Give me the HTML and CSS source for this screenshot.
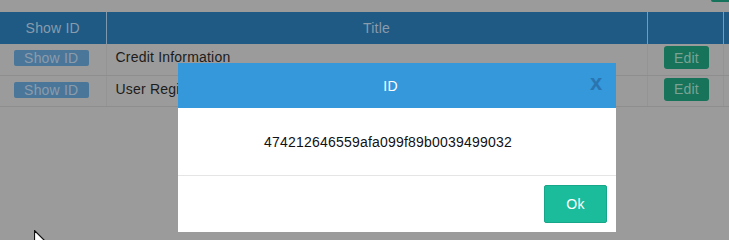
FILE: index.html
```html
<!DOCTYPE html>
<html lang="en">
<head>
  <meta charset="UTF-8">
  <title>Records</title>
  <link rel="stylesheet" href="styles.css">
</head>
<body>

  <div class="toolbar">
    <span class="add-btn"></span>
  </div>

  <table class="records">
    <colgroup>
      <col class="w-id">
      <col class="w-title">
      <col class="w-edit">
      <col class="w-extra">
    </colgroup>
    <thead>
      <tr>
        <th>Show ID</th>
        <th>Title</th>
        <th></th>
        <th></th>
      </tr>
    </thead>
    <tbody>
      <tr>
        <td class="show-cell"><button class="show-btn">Show ID</button></td>
        <td class="title">Credit Information</td>
        <td class="edit-cell"><button class="edit-btn">Edit</button></td>
        <td></td>
      </tr>
      <tr>
        <td class="show-cell"><button class="show-btn">Show ID</button></td>
        <td class="title">User Registration</td>
        <td class="edit-cell"><button class="edit-btn">Edit</button></td>
        <td></td>
      </tr>
    </tbody>
  </table>

  <div class="modal">
    <div class="modal-header">
      <span class="modal-title">ID</span>
      <span class="modal-close">x</span>
    </div>
    <div class="modal-body">474212646559afa099f89b0039499032</div>
    <div class="modal-footer">
      <button class="ok-btn">Ok</button>
    </div>
  </div>

  <!-- mouse pointer -->
  <svg class="cursor" width="12" height="18" viewBox="0 0 12 18">
    <path d="M0.5 0.5 L0.5 15 L4 11.5 L6.5 17 L8.5 16 L6 10.5 L10.5 10.5 Z" fill="#fff" stroke="#111" stroke-width="1.2"/>
  </svg>

</body>
</html>
```

FILE: styles.css
```css
body {
  margin: 0;
  height: 240px;
  background: #9b9b9b;
  overflow: hidden;
  font-family: "Liberation Sans", Arial, sans-serif;
  font-size: 14px;
  letter-spacing: 0.2px;
  position: relative;
}

.toolbar {
  height: 12px;
  display: flex;
  justify-content: flex-end;
}

.add-btn {
  display: block;
  width: 18px;
  height: 2px;
  background: #15735c;
  border-radius: 0 0 0 2px;
}

.records {
  border-collapse: collapse;
  width: 760px;
  table-layout: fixed;
}

.w-id { width: 106px; }
.w-title { width: 541px; }
.w-edit { width: 76px; }
.w-extra { width: 37px; }

.records th {
  height: 32px;
  padding: 0;
  background: #1e5a84;
  color: #8a9bab;
  font-weight: normal;
  border-right: 1px solid #7f98ad;
}

.records td {
  height: 31px;
  box-sizing: border-box;
  padding: 0;
  vertical-align: top;
  border-bottom: 1px solid #8e8e8e;
  border-right: 1px solid #949494;
  color: #1c1c1c;
  line-height: 16px;
}

.records td.show-cell { padding: 6px 3px 0 0; text-align: center; }
.records td.title { padding: 5px 0 0 9px; }
.records td.edit-cell { padding: 2px 0 0 3px; text-align: center; }

.show-btn {
  display: inline-block;
  width: 75px;
  height: 16px;
  padding: 0;
  border: 0;
  border-radius: 2px;
  background: #4a7699;
  color: #8c9cab;
  font-family: inherit;
  font-size: 14px;
  letter-spacing: inherit;
  line-height: 16px;
  vertical-align: top;
}

.edit-btn {
  display: inline-block;
  width: 45px;
  height: 23px;
  padding: 0;
  border: 0;
  border-radius: 3px;
  background: #17735a;
  color: #7aa395;
  font-family: inherit;
  font-size: 14px;
  letter-spacing: inherit;
  vertical-align: top;
}

.modal {
  position: absolute;
  left: 178px;
  top: 63px;
  width: 438px;
  background: #fff;
}

.modal-header {
  height: 45px;
  padding: 0 13px;
  background: #3498db;
  display: flex;
  align-items: center;
}

.modal-title {
  flex: 1;
  text-align: center;
  color: #fff;
}

.modal-close {
  width: 13px;
  color: #2a74b0;
  font-size: 22px;
  font-weight: bold;
  line-height: 1;
  margin-top: -6px;
}

.modal-body {
  height: 67px;
  padding-right: 18px;
  display: flex;
  align-items: center;
  justify-content: center;
  color: #111;
  border-bottom: 1px solid #e5e5e5;
}

.modal-footer {
  padding: 9px;
  display: flex;
  justify-content: flex-end;
}

.ok-btn {
  width: 63px;
  height: 38px;
  border: 1px solid #17a689;
  border-radius: 2px;
  background: #1abc9c;
  color: #fff;
  font-family: inherit;
  font-size: 14px;
  letter-spacing: inherit;
}

.cursor {
  position: absolute;
  left: 34px;
  top: 230px;
}
```
